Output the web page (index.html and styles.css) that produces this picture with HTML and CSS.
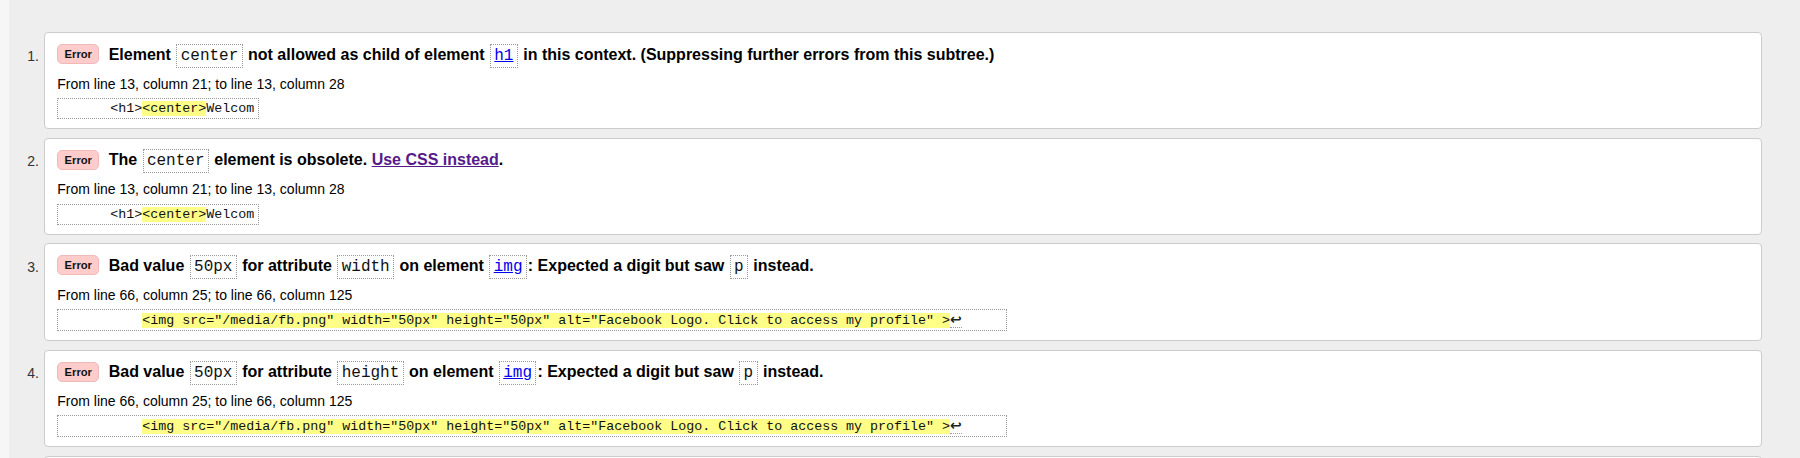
FILE: index.html
```html
<!DOCTYPE html>
<html lang="en">
<head>
<meta charset="utf-8">
<title>Validation results</title>
<link rel="stylesheet" href="styles.css">
</head>
<body>
<div class="page">
<ol class="messages">
<li class="row">
<span class="num">1.</span>
<div class="card">
<p class="title"><span class="badge">Error</span> Element <code>center</code> not allowed as child of element <code><a href="#">h1</a></code> in this context. (Suppressing further errors from this subtree.)</p>
<p class="loc">From line 13, column 21; to line 13, column 28</p>
<code class="extract">      &lt;h1&gt;<b>&lt;center&gt;</b>Welcom</code>
</div>
</li>
<li class="row">
<span class="num">2.</span>
<div class="card">
<p class="title"><span class="badge">Error</span> The <code>center</code> element is obsolete. <a class="visited" href="#">Use CSS instead</a>.</p>
<p class="loc">From line 13, column 21; to line 13, column 28</p>
<code class="extract">      &lt;h1&gt;<b>&lt;center&gt;</b>Welcom</code>
</div>
</li>
<li class="row">
<span class="num">3.</span>
<div class="card">
<p class="title"><span class="badge">Error</span> Bad value <code>50px</code> for attribute <code>width</code> on element <code><a href="#">img</a></code>: Expected a digit but saw <code>p</code> instead.</p>
<p class="loc">From line 66, column 25; to line 66, column 125</p>
<code class="extract">          <b>&lt;img src="/media/fb.png" width="50px" height="50px" alt="Facebook Logo. Click to access my profile" &gt;</b><span class="lf">↩</span>     </code>
</div>
</li>
<li class="row">
<span class="num">4.</span>
<div class="card">
<p class="title"><span class="badge">Error</span> Bad value <code>50px</code> for attribute <code>height</code> on element <code><a href="#">img</a></code>: Expected a digit but saw <code>p</code> instead.</p>
<p class="loc">From line 66, column 25; to line 66, column 125</p>
<code class="extract">          <b>&lt;img src="/media/fb.png" width="50px" height="50px" alt="Facebook Logo. Click to access my profile" &gt;</b><span class="lf">↩</span>     </code>
</div>
</li>
<li class="row">
<span class="num"></span>
<div class="card card-empty"></div>
</li>
</ol>
</div>
</body>
</html>
```

FILE: styles.css
```css
html, body {
  margin: 0;
  padding: 0;
}

body {
  background: #f6f6f6;
  font-family: "Liberation Sans", Arial, sans-serif;
  color: #000;
}

.page {
  margin-left: 9px;
  background: #eee;
  min-height: 100vh;
  padding: 32.3px 38px 0 0;
  box-sizing: border-box;
}

.messages {
  list-style: none;
  margin: 0;
  padding: 0;
}

.row {
  display: flex;
  margin-bottom: 8.7px;
}

.num {
  flex: none;
  width: 30px;
  margin-right: 5.3px;
  padding-top: 12.7px;
  text-align: right;
  font-size: 14px;
  line-height: 22px;
  color: #333;
}

.card {
  flex: 1;
  min-width: 0;
  background: #fff;
  border: 1px solid #ccc;
  border-radius: 4px;
  padding: 10.7px 12px 9px;
}

.card-empty {
  height: 76px;
}

.title {
  margin: 0;
  font-size: 16px;
  font-weight: bold;
  line-height: 22px;
}

.badge {
  display: inline-block;
  box-sizing: border-box;
  height: 20px;
  padding: 0 6.3px;
  margin-right: 5px;
  background: #fcc;
  border: 1px solid #f2b9b9;
  border-radius: 5px;
  font-size: 11.2px;
  line-height: 18px;
  font-weight: bold;
  color: #111;
  vertical-align: 1.5px;
}

.title code {
  display: inline-block;
  box-sizing: border-box;
  height: 24px;
  padding: 0 3.3px;
  margin: 0 1px;
  border: 1px dotted #999;
  font-family: "Liberation Mono", "Courier New", monospace;
  font-size: 16px;
  font-weight: normal;
  line-height: 22px;
  color: #111;
}

.title code a {
  color: #00e;
  text-decoration: underline;
}

.title a.visited {
  color: #551a8b;
  text-decoration: underline;
}

.loc {
  margin: 6.8px 0 5.3px;
  font-size: 14px;
  line-height: 18px;
}

.extract {
  display: block;
  width: fit-content;
  padding: 0 4px;
  border: 1px dotted #999;
  font-family: "Liberation Mono", "Courier New", monospace;
  font-size: 13.33px;
  line-height: 19px;
  white-space: pre;
  color: #111;
}

.extract b {
  background: #ff8;
  font-weight: normal;
}

.extract .lf {
  font-family: "DejaVu Sans", sans-serif;
  font-size: 14px;
  font-weight: bold;
  line-height: 19px;
  border-bottom: 1px dotted #999;
  color: #222;
}
```
